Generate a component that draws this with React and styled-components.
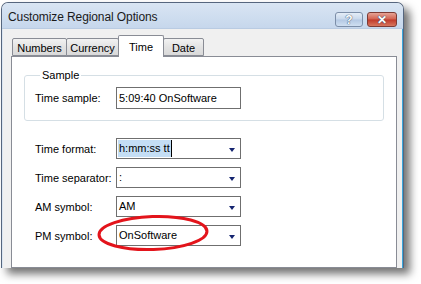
import React from 'react'
import styled, { createGlobalStyle } from 'styled-components'

const GlobalStyle = createGlobalStyle`
  html, body {
    margin: 0;
    padding: 0;
    background: #ffffff;
  }
  body {
    font-family: "Liberation Sans", Arial, sans-serif;
    font-size: 11px;
    color: #000;
  }
`

const Stage = styled.div`
  position: relative;
  width: 421px;
  height: 284px;
  padding: 2px 0 0 1px;
  box-sizing: border-box;
  overflow: hidden;
`

const Window = styled.div`
  width: 403px;
  height: 266px;
  box-sizing: border-box;
  border: 1px solid #56667e;
  border-bottom: none;
  border-radius: 7px 7px 0 0;
  background: #f0f0f0;
  display: flex;
  flex-direction: column;
  box-shadow: 6px 6px 8px rgba(0, 0, 0, 0.55);
  overflow: hidden;
`

const TitleBar = styled.div`
  height: 25px;
  flex: none;
  display: flex;
  align-items: flex-start;
  justify-content: space-between;
  padding: 0 6px 0 6px;
  background: linear-gradient(#d9e5f3, #c6d7ec);
  border-bottom: 1px solid #b9cbe2;

  h1 {
    margin: 7px 0 0 0;
    font-size: 12px;
    font-weight: normal;
    color: #1a1a1a;
    letter-spacing: -0.1px;
  }
`

const Buttons = styled.div`
  display: flex;
  gap: 4px;
  margin-top: 9px;
`

const CaptionButton = styled.div`
  width: ${p => p.$w}px;
  height: 13px;
  border: 1px solid ${p => (p.$close ? '#7d3b35' : '#7c8ea8')};
  border-radius: 3px;
  background: ${p =>
    p.$close
      ? 'linear-gradient(#e6a396 0%, #d2614f 48%, #c0392a 52%, #d7765e 100%)'
      : 'linear-gradient(#e4edf7 0%, #c8d8ec 48%, #b3c8e3 52%, #cfdff1 100%)'};
  display: flex;
  align-items: center;
  justify-content: center;
  font-weight: bold;
  font-size: 12px;
  color: #ffffff;
  text-shadow: 0 0 1px #344a6a, 0 0 1px #344a6a;
  line-height: 1;
`

const Body = styled.div`
  flex: 1;
  display: flex;
  flex-direction: column;
  padding: 6px 6px 0 9px;
  box-shadow: inset -1px 0 0 #3aa6dc, inset 1px 0 0 #dbe6f2;
`

const TabRow = styled.div`
  display: flex;
  align-items: flex-end;
  height: 21px;
  padding-left: 1px;
  position: relative;
  z-index: 1;
`

const Tab = styled.div`
  width: ${p => p.$w}px;
  height: ${p => (p.$active ? 22 : 18)}px;
  margin-bottom: ${p => (p.$active ? -1 : 0)}px;
  box-sizing: border-box;
  border: 1px solid #898c95;
  border-bottom: ${p => (p.$active ? 'none' : '1px solid #898c95')};
  margin-left: ${p => (p.$first ? 0 : -1)}px;
  background: ${p => (p.$active ? '#ffffff' : 'linear-gradient(#f2f2f2, #e3e3e3 50%, #d9d9d9)')};
  border-radius: 2px 2px 0 0;
  display: flex;
  align-items: center;
  justify-content: center;
  padding-top: ${p => (p.$active ? 0 : 2)}px;
  font-size: 11px;
  color: #000;
`

const Panel = styled.div`
  flex: 1;
  background: #ffffff;
  border: 1px solid #898c95;
  padding: 12px 12px 0 12px;
`

const Group = styled.fieldset`
  margin: 0;
  height: 52px;
  box-sizing: border-box;
  border: 1px solid #d5dfe5;
  border-radius: 3px;
  padding: 5px 0 0 10px;

  legend {
    padding: 0 2px;
    margin-left: 5px;
    font-size: 11px;
    line-height: 13px;
  }
`

const Row = styled.div`
  display: grid;
  grid-template-columns: 81px 125px;
  align-items: center;
`

const Rows = styled.div`
  display: flex;
  flex-direction: column;
  gap: 8px;
  margin: 17px 0 0 11px;
`

const Label = styled.span`
  font-size: 11px;
`

const TextBox = styled.div`
  height: 22px;
  box-sizing: border-box;
  border: 1px solid #6f6f6f;
  padding-left: 2px;
  display: flex;
  align-items: center;
  font-size: 11px;
`

const Combo = styled.div`
  height: 21px;
  box-sizing: border-box;
  border: 1px solid #6f6f6f;
  padding: 0 5px 0 1px;
  display: flex;
  align-items: center;
  justify-content: space-between;
  font-size: 11px;
`

const Value = styled.span`
  padding: 2px 1px;
  background: ${p => (p.$selected ? '#c4def5' : 'transparent')};
  border-right: ${p => (p.$selected ? '1px solid #000' : 'none')};
  line-height: 13px;
`

const Arrow = styled.span`
  width: 0;
  height: 0;
  border-left: 3.5px solid transparent;
  border-right: 3.5px solid transparent;
  border-top: 4px solid #142470;
  margin-top: 2px;
`

const Highlight = styled.svg`
  position: absolute;
  left: 96px;
  top: 214px;
  width: 114px;
  height: 38px;
  overflow: visible;
`

const tabs = [
  { name: 'Numbers', w: 55 },
  { name: 'Currency', w: 53 },
  { name: 'Time', w: 46, active: true },
  { name: 'Date', w: 41 },
]

const fields = [
  { label: 'Time format:', value: 'h:mm:ss tt', selected: true },
  { label: 'Time separator:', value: ':' },
  { label: 'AM symbol:', value: 'AM' },
  { label: 'PM symbol:', value: 'OnSoftware' },
]

export default function App() {
  return (
    <Stage>
      <GlobalStyle />
      <Window>
        <TitleBar>
          <h1>Customize Regional Options</h1>
          <Buttons>
            <CaptionButton $w={26}>?</CaptionButton>
            <CaptionButton $w={28} $close>✕</CaptionButton>
          </Buttons>
        </TitleBar>
        <Body>
          <TabRow>
            {tabs.map((t, i) => (
              <Tab key={t.name} $w={t.w} $first={i === 0} $active={t.active}>{t.name}</Tab>
            ))}
          </TabRow>
          <Panel>
            <Group>
              <legend>Sample</legend>
              <Row>
                <Label>Time sample:</Label>
                <TextBox>5:09:40 OnSoftware</TextBox>
              </Row>
            </Group>
            <Rows>
              {fields.map(f => (
                <Row key={f.label}>
                  <Label>{f.label}</Label>
                  <Combo>
                    <Value $selected={f.selected}>{f.value}</Value>
                    <Arrow />
                  </Combo>
                </Row>
              ))}
            </Rows>
          </Panel>
        </Body>
      </Window>
      <Highlight viewBox="0 0 114 38">
        <ellipse cx="57" cy="19" rx="54" ry="16.5" fill="none" stroke="#e3141b" strokeWidth="3" transform="rotate(-2 57 19)" />
      </Highlight>
    </Stage>
  )
}
